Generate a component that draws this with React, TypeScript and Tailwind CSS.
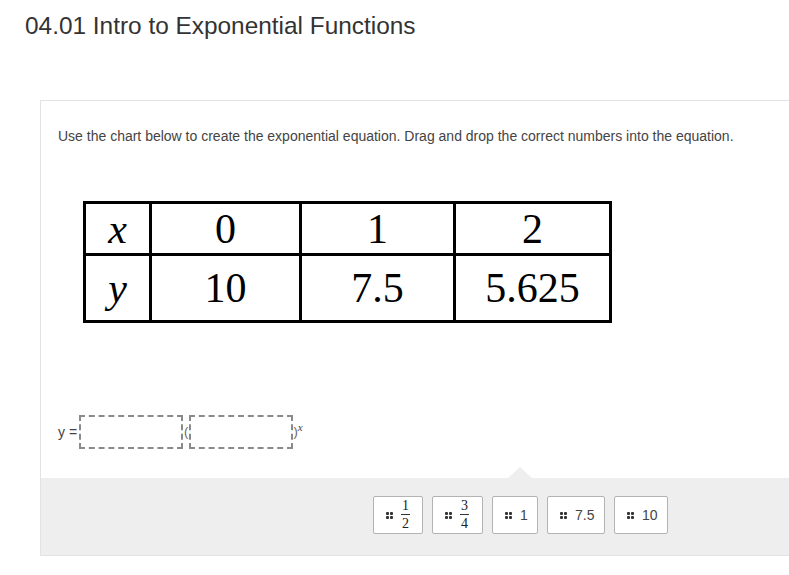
import React from 'react'

const sans = { fontFamily: '"Liberation Sans", Arial, sans-serif' }
const serif = { fontFamily: '"Liberation Serif", "Times New Roman", serif' }

function Grip() {
  return (
    <span className="grid grid-cols-2 gap-[1px] w-[7px] h-[7px] shrink-0">
      <span className="bg-[#333] rounded-[1px]" />
      <span className="bg-[#333] rounded-[1px]" />
      <span className="bg-[#333] rounded-[1px]" />
      <span className="bg-[#333] rounded-[1px]" />
    </span>
  )
}

function Frac({ n, d }: { n: string; d: string }) {
  return (
    <span className="inline-flex flex-col items-center leading-none text-[14px] text-[#222]" style={serif}>
      <span className="px-[1px] pb-[1px]">{n}</span>
      <span className="px-[1px] pt-[2px] border-t border-[#333]">{d}</span>
    </span>
  )
}

function Tile({ w, children }: { w: string; children: React.ReactNode }) {
  return (
    <div className={`${w} h-[38px] flex items-center gap-[8px] px-[12px] bg-white border border-[#b3b3b3] rounded-[2px] text-[14px] text-[#444]`}>
      <Grip />
      {children}
    </div>
  )
}

const cell = 'border-[3px] border-black text-center text-[42px] leading-none text-black'

export default function App() {
  return (
    <div className="w-[789px] h-[575px] bg-white overflow-hidden" style={sans}>
      <h1 className="pl-[25px] pt-[11px] text-[24.4px] leading-[30px] text-[#333]">
        04.01 Intro to Exponential Functions
      </h1>

      <div className="ml-[40px] mt-[59px] border-l border-t border-b border-[#e3e3e3]">
        <p className="pl-[17px] pt-[25px] text-[14px] leading-[20px] text-[#444]">
          Use the chart below to create the exponential equation. Drag and drop the correct numbers into the equation.
        </p>

        <table className="ml-[42px] mt-[55px] border-collapse" style={serif}>
          <tbody>
            <tr className="h-[52px]">
              <td className={`${cell} w-[66px] italic`}>x</td>
              <td className={`${cell} w-[150px]`}>0</td>
              <td className={`${cell} w-[154px]`}>1</td>
              <td className={`${cell} w-[156px]`}>2</td>
            </tr>
            <tr className="h-[67px]">
              <td className={`${cell} italic`}>y</td>
              <td className={cell}>10</td>
              <td className={cell}>7.5</td>
              <td className={cell}>5.625</td>
            </tr>
          </tbody>
        </table>

        <div className="flex items-center pl-[17px] mt-[92px] h-[34px] text-[14px] text-[#444]">
          <span className="mr-[2px]">y =</span>
          <span className="w-[104px] h-[34px] border-2 border-dashed border-[#8a8a8a]" />
          <span className="mx-[1px] text-[13px] text-[#666]">(</span>
          <span className="w-[104px] h-[34px] border-2 border-dashed border-[#8a8a8a]" />
          <span className="text-[13px] text-[#666]">)</span>
          <span className="-translate-y-[5px] text-[11px] leading-none italic text-[#444]" style={serif}>x</span>
        </div>

        <div className="relative mt-[29px] h-[77px] bg-[#eeeeee] flex items-start gap-[9px] pl-[332px] pt-[18px]">
          <span className="absolute left-[467px] -top-[11px] w-0 h-0 border-l-[12px] border-r-[12px] border-b-[11px] border-l-transparent border-r-transparent border-b-[#eeeeee]" />
          <Tile w="w-[50px]">
            <Frac n="1" d="2" />
          </Tile>
          <Tile w="w-[51px]">
            <Frac n="3" d="4" />
          </Tile>
          <Tile w="w-[46px]">
            <span>1</span>
          </Tile>
          <Tile w="w-[58px]">
            <span>7.5</span>
          </Tile>
          <Tile w="w-[54px]">
            <span>10</span>
          </Tile>
        </div>
      </div>
    </div>
  )
}
